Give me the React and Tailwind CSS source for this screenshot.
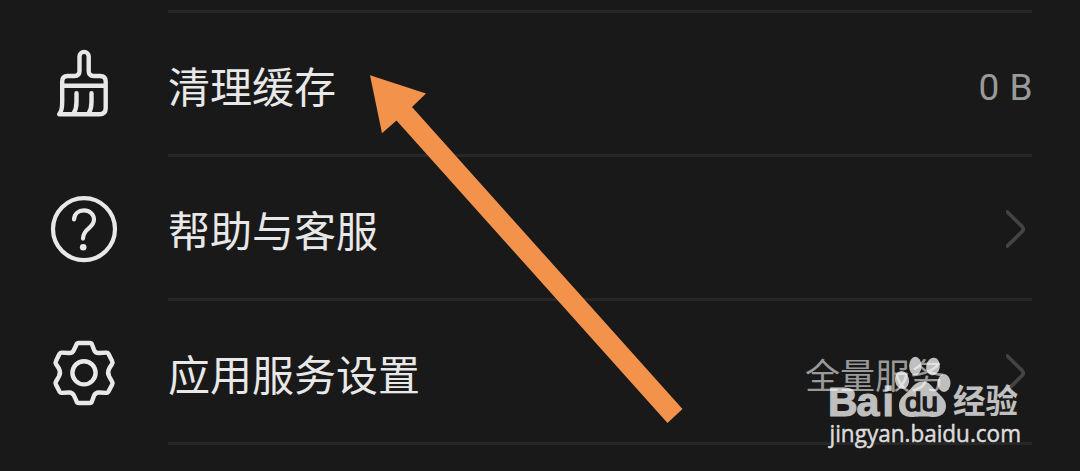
function BrushIcon() {
  return (
    <svg
      viewBox="0 0 90 90"
      className="h-[90px] w-[90px]"
      fill="none"
      stroke="#e8e8e8"
      strokeWidth="4.4"
      strokeLinecap="round"
      strokeLinejoin="round"
    >
      <path d="M22.2 45.5V41.5Q22.2 36 27.7 36H34.5Q39.5 36 39.5 31V16.5A4.6 4.6 0 0 1 48.7 16.5V31Q48.7 36 53.7 36H60Q65.7 36 65.7 41.5V68Q65.7 74.3 59.4 74.3H19.2Q22.2 71 22.2 62V45.8H65.7" />
      <path d="M36.5 53.3V62Q36.5 69 33.6 73.5M51.5 53.3V62Q51.5 69 48.6 73.5" />
    </svg>
  );
}

function HelpIcon() {
  return (
    <svg viewBox="0 -1.6 90 90" className="h-[90px] w-[90px]" fill="none" stroke="#e8e8e8">
      <circle cx="44" cy="43.5" r="31" strokeWidth="4.2" />
      <path
        d="M34 33.8C34.3 28 38.6 24.8 43.9 24.8C49.6 24.8 54 28.8 54 34C54 38 51.8 40.2 48.7 42.7C44.8 45.8 43 48 43 53"
        strokeWidth="4.2"
        strokeLinecap="round"
      />
      <circle cx="43.2" cy="61.7" r="3.3" fill="#e8e8e8" stroke="none" />
    </svg>
  );
}

function GearIcon() {
  return (
    <svg
      viewBox="0 -2 90 90"
      className="h-[90px] w-[90px]"
      fill="none"
      stroke="#e8e8e8"
      strokeWidth="4.4"
      strokeLinejoin="round"
    >
      <path d="M38.6 13H49.9Q51.4 13 52 14.5L54 19.8Q55.5 23.3 59.2 23L66.3 22.6Q67.8 22.5 68.5 23.8L72.2 31.2Q73 32.7 72 34L69.2 38.5Q67 42.5 69.2 46.5L72 51.5Q73 53 72.2 54.4L68.5 61.6Q67.8 63 66.3 62.9L59.2 62.5Q55.5 62.3 54 65.7L52 71.2Q51.4 73 49.9 73H38.6Q37.1 73 36.5 71.2L34 65.7Q32.5 62.3 28.8 62.5L21.8 62.9Q20.3 63 19.5 61.6L15.9 54.4Q15.1 53 16 51.5L18.9 46.5Q21.1 42.5 18.9 38.5L16 34Q15.1 32.7 15.9 31.2L19.5 23.8Q20.3 22.5 21.8 22.6L28.8 23Q32.5 23.3 34 19.8L36.5 14.5Q37.1 13 38.6 13Z" />
      <circle cx="44" cy="42.8" r="11.6" />
    </svg>
  );
}

function Chevron() {
  return (
    <svg
      viewBox="0 0 26 42"
      className="h-[42px] w-[26px]"
      fill="none"
      stroke="#444444"
      strokeWidth="3.6"
      strokeLinecap="round"
      strokeLinejoin="round"
    >
      <path d="M1.2 4.8L16.4 19.8Q18.2 22 16.4 24.3L1.2 39.2" />
    </svg>
  );
}

function Row({ icon, label, value, arrow }) {
  return (
    <div className="flex h-36 pl-10 pr-12">
      <div className="flex w-32 shrink-0 items-center">{icon}</div>
      <div className="flex flex-1 items-center border-b-[3px] border-[#272727]">
        <span className="flex-1 pt-0.5 text-[42px] leading-none text-[#e8e8e8]">{label}</span>
        {value}
        {arrow && (
          <span className="ml-[60px]">
            <Chevron />
          </span>
        )}
      </div>
    </div>
  );
}

function Watermark() {
  return (
    <svg
      viewBox="0 0 270 120"
      className="absolute left-[790px] top-[340px] h-[120px] w-[270px]"
      fill="#ffffff"
    >
      <g opacity="0.72">
        <text x="38 66.5 92.5" y="76" stroke="#ffffff" strokeWidth="1.2" className="font-['Liberation_Sans'] text-[41px] font-bold">
          Bai
        </text>
        <ellipse cx="125.3" cy="26" rx="6.2" ry="9.2" />
        <ellipse cx="143" cy="26.5" rx="6.8" ry="8.8" transform="rotate(10 143 26.5)" />
        <ellipse cx="112" cy="40" rx="7" ry="9" transform="rotate(-10 112 40)" />
        <ellipse cx="154" cy="43" rx="6.5" ry="9" />
        <path d="M133 41.5C140 41.5 142 47 147 52C152 57 156 60 156 66C156 73 151 77 144 77C140 77 138 76.5 132.5 76.5C127 76.5 125 77 121 77C114 77 109 73 109 66C109 59 113 56 118 51.5C123 47 125 41.5 133 41.5Z" />
        <text x="163" y="73" textLength="65" lengthAdjust="spacingAndGlyphs" className="font-['Noto_Sans_CJK_SC'] text-[33px] font-bold">
          经验
        </text>
      </g>
      <text x="115" y="71" textLength="33" lengthAdjust="spacingAndGlyphs" fill="#1c1c1c" stroke="#1c1c1c" strokeWidth="1.3" className="font-['Liberation_Sans'] text-[25px]">
        du
      </text>
      <text x="39.5" y="101.5" textLength="191.5" lengthAdjust="spacingAndGlyphs" fill="#dcdcdc" stroke="#dcdcdc" strokeWidth="0.5" className="font-['Open_Sans'] text-[23.5px]">
        jingyan.baidu.com
      </text>
    </svg>
  );
}

export default function App() {
  return (
    <div className="relative h-[471px] w-[1080px] overflow-hidden bg-[#191919] font-['Noto_Sans_CJK_SC',sans-serif]">
      <div className="ml-[168px] mr-12 mt-2.5 h-[3px] bg-[#272727]" />
      <Row
        icon={<BrushIcon />}
        label="清理缓存"
        value={
          <span className="pt-2 font-['Roboto'] text-[37px] leading-none tracking-[-0.5px] text-[#9a9a9a] [word-spacing:2px]">
            0 B
          </span>
        }
      />
      <Row icon={<HelpIcon />} label="帮助与客服" arrow />
      <Row
        icon={<GearIcon />}
        label="应用服务设置"
        value={<span className="mr-px pt-1 text-[35px] leading-none text-[#9a9a9a]">全量服务</span>}
        arrow
      />

      {/* pointer over the first row */}
      <svg viewBox="0 0 1080 471" className="absolute left-0 top-0 h-[471px] w-[1080px]">
        <path d="M370 75.3L426 93.5L412 107L682.5 409L667.5 423L396.5 120.5L382 133.3Z" fill="#f3924b" />
      </svg>
      <Watermark />
    </div>
  );
}
